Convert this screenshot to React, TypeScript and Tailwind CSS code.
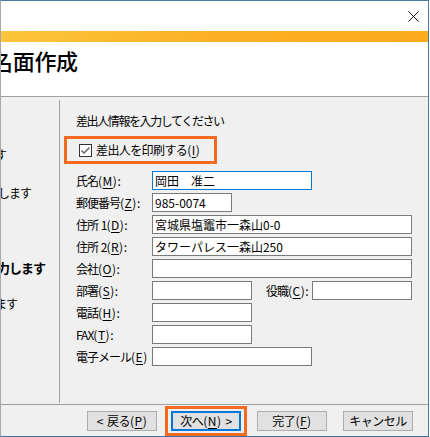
import React from "react";

const ui = { fontFamily: '"Noto Sans CJK JP", "Noto Sans", sans-serif' };

// mnemonic key like "(M)" with the letter underlined
function K({ k, colon }: { k: string; colon?: boolean }) {
  return (
    <span className="tracking-[0.5px]">
      (<span className="underline underline-offset-2">{k}</span>){colon ? ":" : ""}
    </span>
  );
}

function Field({
  label,
  width,
  value,
  focused,
}: {
  label: React.ReactNode;
  width: string;
  value?: string;
  focused?: boolean;
}) {
  return (
    <div className="flex items-center h-[19px]">
      <div className="w-[76px] shrink-0 text-[12px] tracking-[-1px] leading-none whitespace-nowrap">{label}</div>
      <Input width={width} value={value} focused={focused} />
    </div>
  );
}

function Input({ width, value, focused }: { width: string; value?: string; focused?: boolean }) {
  return (
    <div
      className={`${width} h-[19px] bg-white border flex items-center pl-[2px] text-[12px] leading-none whitespace-nowrap overflow-hidden ${
        focused ? "border-[#0078d7]" : "border-[#7a7a7a]"
      }`}
    >
      {value}
    </div>
  );
}

function Btn({ children, primary }: { children: React.ReactNode; primary?: boolean }) {
  return (
    <div
      className={`w-[70px] h-[20px] bg-[#e1e1e1] flex items-center justify-center text-[12px] tracking-[-0.5px] leading-none ${
        primary ? "border-2 border-[#0078d7]" : "border border-[#adadad]"
      }`}
    >
      <span className="whitespace-nowrap">{children}</span>
    </div>
  );
}

export default function App() {
  return (
    <div className="w-[430px] h-[437px] bg-white text-black" style={ui}>
      <div className="w-[429px] h-[437px] flex flex-col border-t border-b border-r border-t-[#4a7bab] border-b-[#3c6fa3] border-r-[#4a7bab] border-l border-l-[#a8a8a8] overflow-hidden">
        {/* title bar */}
        <div className="h-[30px] shrink-0 bg-white flex items-center justify-end pr-[9px]">
          <svg width="11" height="11" viewBox="0 0 11 11" className="mt-[1px]">
            <path d="M0.5 0.5L10.5 10.5M10.5 0.5L0.5 10.5" stroke="#111" strokeWidth="1" />
          </svg>
        </div>
        <div className="h-[11px] shrink-0 bg-gradient-to-r from-[#fdc53c] via-[#fbb023] to-[#fbab1c]" />
        {/* header */}
        <div className="h-[55px] shrink-0 bg-white border-b border-[#a0a0a0] pt-[5px] overflow-hidden">
          <div className="ml-[-10px] text-[22px] leading-[26px] tracking-[-0.3px] font-medium">名面作成</div>
        </div>

        {/* body */}
        <div className="h-[307px] shrink-0 bg-[#f0f0f0] flex">
          <div className="w-[58px] shrink-0 overflow-hidden text-[12px] tracking-[-1px] leading-none whitespace-nowrap">
            <div className="ml-[-6px] mt-[52px]">す</div>
            <div className="ml-[-3px] mt-[26px]">します</div>
            <div className="ml-[-4px] mt-[62px] font-bold text-[13px]">力します</div>
            <div className="ml-[-6px] mt-[24px]">ます</div>
          </div>
          <div className="w-px bg-[#a0a0a0] mt-[3px] mb-[1px]" />
          <div className="flex-1 pl-[16px] pt-[16px]">
            <div className="text-[12px] tracking-[-1.4px] leading-[16px]">差出人情報を入力してください</div>
            <div className="ml-[-12px] mt-[7px] w-[153px] h-[28px] border-[3px] border-[#f26b21] flex items-center pl-[12px]">
              <div className="w-[13px] h-[13px] bg-white border border-[#333] flex items-center justify-center">
                <svg width="11" height="11" viewBox="0 0 11 11">
                  <path d="M1.5 5.5L4 8L9.5 2.5" fill="none" stroke="#666" strokeWidth="1.5" />
                </svg>
              </div>
              <div className="ml-[4px] text-[12px] tracking-[-0.6px] leading-none whitespace-nowrap">
                差出人を印刷する<K k="I" />
              </div>
            </div>
            <div className="mt-[7px] flex flex-col gap-[3px]">
              <Field label={<>氏名<K k="M" colon /></>} width="w-[160px]" value="岡田　准二" focused />
              <Field label={<>郵便番号<K k="Z" colon /></>} width="w-[80px]" value="985-0074" />
              <Field label={<>住所<span className="tracking-normal"> </span>1<K k="D" colon /></>} width="w-[260px]" value="宮城県塩竈市一森山0-0" />
              <Field label={<>住所<span className="tracking-normal"> </span>2<K k="R" colon /></>} width="w-[260px]" value="タワーパレス一森山250" />
              <Field label={<>会社<K k="O" colon /></>} width="w-[260px]" />
              <div className="flex items-center h-[19px]">
                <div className="w-[76px] shrink-0 text-[12px] tracking-[-1px] leading-none whitespace-nowrap">
                  部署<K k="S" colon />
                </div>
                <Input width="w-[100px]" />
                <div className="ml-[14px] w-[46px] text-[12px] tracking-[-1px] leading-none whitespace-nowrap">
                  役職<K k="C" colon />
                </div>
                <Input width="w-[100px]" />
              </div>
              <Field label={<>電話<K k="H" colon /></>} width="w-[100px]" />
              <Field label={<>FAX<K k="T" colon /></>} width="w-[100px]" />
              <Field label={<>電子メール<K k="E" /></>} width="w-[160px]" />
            </div>
          </div>
        </div>

        {/* footer */}
        <div className="h-[32px] shrink-0 bg-[#f0f0f0] border-t border-[#a0a0a0] flex items-center pl-[86px]">
          <Btn>
            <span className="mr-[4px]">&lt;</span>戻る<K k="P" />
          </Btn>
          <div className="ml-[8px] w-[82px] h-[30px] border-[3px] border-[#f26b21] flex items-center justify-center">
            <Btn primary>
              次へ<K k="N" />
              <span className="ml-[4px]">&gt;</span>
            </Btn>
          </div>
          <div className="ml-[10px]">
            <Btn>
              完了<K k="F" />
            </Btn>
          </div>
          <div className="ml-[16px]">
            <Btn>キャンセル</Btn>
          </div>
        </div>
      </div>
    </div>
  );
}
